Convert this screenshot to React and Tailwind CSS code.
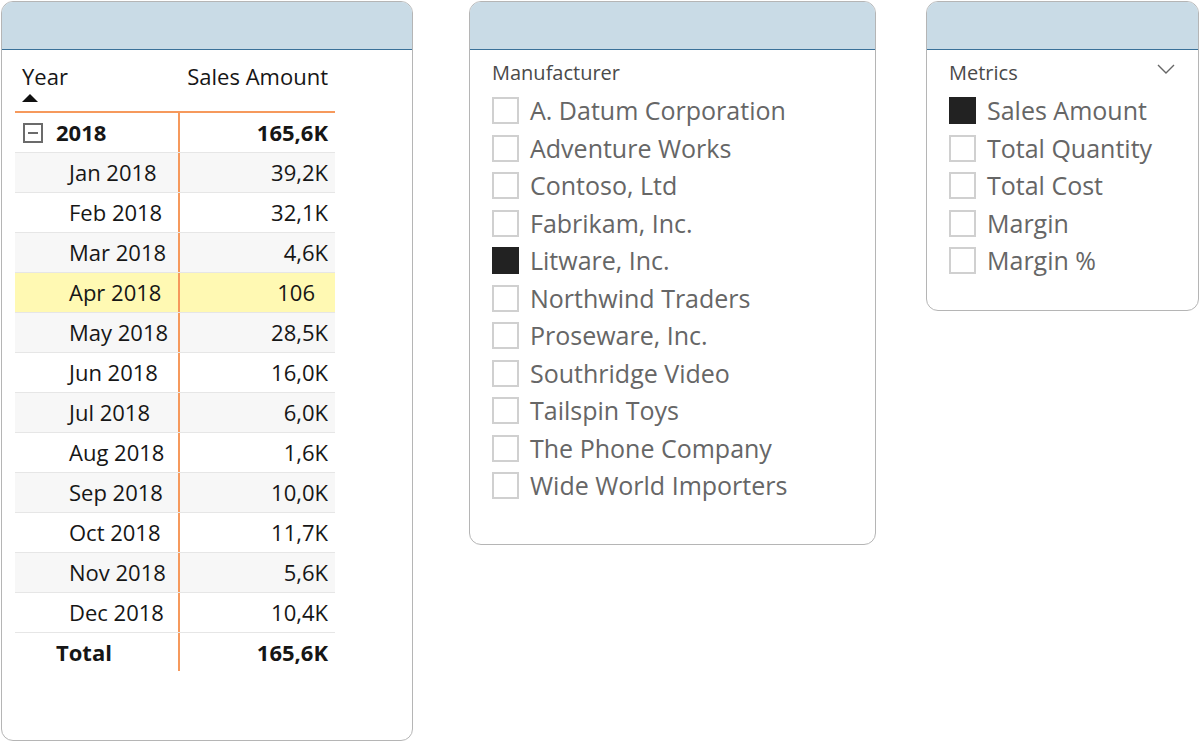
import { useState } from 'react';

const MONTHS = [
  { label: 'Jan 2018', value: '39,2K', bg: 'bg-[#f7f7f7]' },
  { label: 'Feb 2018', value: '32,1K', bg: 'bg-white' },
  { label: 'Mar 2018', value: '4,6K', bg: 'bg-[#f7f7f7]' },
  { label: 'Apr 2018', value: '106', bg: 'bg-[#fff9b3]', highlight: true },
  { label: 'May 2018', value: '28,5K', bg: 'bg-[#f7f7f7]' },
  { label: 'Jun 2018', value: '16,0K', bg: 'bg-white' },
  { label: 'Jul 2018', value: '6,0K', bg: 'bg-[#f7f7f7]' },
  { label: 'Aug 2018', value: '1,6K', bg: 'bg-white' },
  { label: 'Sep 2018', value: '10,0K', bg: 'bg-[#f7f7f7]' },
  { label: 'Oct 2018', value: '11,7K', bg: 'bg-white' },
  { label: 'Nov 2018', value: '5,6K', bg: 'bg-[#f7f7f7]' },
  { label: 'Dec 2018', value: '10,4K', bg: 'bg-white' }
];

const MANUFACTURERS = [
  'A. Datum Corporation',
  'Adventure Works',
  'Contoso, Ltd',
  'Fabrikam, Inc.',
  'Litware, Inc.',
  'Northwind Traders',
  'Proseware, Inc.',
  'Southridge Video',
  'Tailspin Toys',
  'The Phone Company',
  'Wide World Importers'
];

const METRICS = ['Sales Amount', 'Total Quantity', 'Total Cost', 'Margin', 'Margin %'];

function Panel({ className, children }) {
  return (
    <div
      className={`flex flex-col flex-shrink-0 rounded-[12px] border border-[#b5b5b5] bg-white overflow-hidden ${className}`}
    >
      {/* Header band */}
      <div className="h-[48px] bg-[#c9dbe6] border-b border-[#3a7199] flex-shrink-0" />
      {children}
    </div>
  );
}

function SlicerItem({ label, checked, onToggle }) {
  return (
    <div
      onClick={onToggle}
      className="h-[37.5px] flex items-center gap-[11px] cursor-pointer"
    >
      <span
        className={`w-[27px] h-[27px] flex-shrink-0 border-2 ${
          checked ? 'bg-[#222222] border-[#222222]' : 'bg-white border-[#d0d0d0]'
        }`}
      />
      <span className="text-[25px] leading-none text-[#666666] whitespace-nowrap">
        {label}
      </span>
    </div>
  );
}

function Matrix() {
  return (
    <div className="ml-[13px] w-[320px] text-[#161616]">
      {/* Column headers */}
      <div className="h-[63px] flex border-b-2 border-[#f6995c]">
        <div className="w-[163px] pl-[7px] pt-[11px]">
          <div className="text-[22px] leading-[30px]">Year</div>
          <svg width="16" height="8" viewBox="0 0 16 8" className="mt-[3px]">
            <polygon points="0,8 8,0 16,8" fill="#111" />
          </svg>
        </div>
        <div className="flex-1 pr-[7px] pt-[11px] text-right text-[22px] leading-[30px]">
          Sales Amount
        </div>
      </div>

      {/* Year row */}
      <div className="h-[40px] flex border-b border-[#e6e6e6] bg-white">
        <div className="w-[165px] border-r-2 border-[#f6995c] flex items-center pl-[8px]">
          <span className="w-[20px] h-[20px] border-2 border-[#6b6b6b] flex items-center justify-center">
            <span className="w-[10px] h-[2px] bg-[#6b6b6b]" />
          </span>
          <span className="ml-[13px] text-[22px] font-bold">2018</span>
        </div>
        <div className="flex-1 flex items-center justify-end pr-[7px] text-[22px] font-bold">
          165,6K
        </div>
      </div>

      {MONTHS.map(m => (
        <div
          key={m.label}
          className={`h-[40px] flex border-b border-[#e6e6e6] ${m.bg}`}
        >
          <div className="w-[165px] border-r-2 border-[#f6995c] flex items-center pl-[54px] text-[22px]">
            {m.label}
          </div>
          <div
            className={`flex-1 flex items-center justify-end text-[22px] ${
              m.highlight ? 'pr-[20px]' : 'pr-[7px]'
            }`}
          >
            {m.value}
          </div>
        </div>
      ))}

      {/* Total */}
      <div className="h-[38px] flex bg-white">
        <div className="w-[165px] border-r-2 border-[#f6995c] flex items-center pl-[41px] text-[22px] font-bold">
          Total
        </div>
        <div className="flex-1 flex items-center justify-end pr-[7px] text-[22px] font-bold">
          165,6K
        </div>
      </div>
    </div>
  );
}

export default function App() {
  const [maker, setMaker] = useState('Litware, Inc.');
  const [metric, setMetric] = useState('Sales Amount');

  return (
    <div
      className="w-[1199px] h-[741px] bg-white flex items-start pl-[1px] pt-[1px]"
      style={{ fontFamily: '"Open Sans", "Noto Sans", sans-serif' }}
    >
      {/* Matrix visual */}
      <Panel className="w-[412px] h-[740px]">
        <Matrix />
      </Panel>

      {/* Manufacturer slicer */}
      <Panel className="w-[407px] h-[544px] ml-[56px]">
        <div className="pl-[22px] pt-[9px]">
          <div className="text-[20px] leading-[28px] text-[#4a4a4a] mb-[5px]">
            Manufacturer
          </div>
          {MANUFACTURERS.map(name => (
            <SlicerItem
              key={name}
              label={name}
              checked={maker === name}
              onToggle={() => setMaker(name)}
            />
          ))}
        </div>
      </Panel>

      {/* Metrics slicer */}
      <Panel className="w-[273px] h-[310px] ml-[50px]">
        <div className="pl-[22px] pr-[23px] pt-[9px]">
          <div className="flex items-center justify-between mb-[5px]">
            <span className="text-[20px] leading-[28px] text-[#4a4a4a]">Metrics</span>
            <svg width="18" height="10" viewBox="0 0 18 10" className="-mt-[8px]">
              <polyline points="1,1 9,9 17,1" fill="none" stroke="#666" strokeWidth="1.4" />
            </svg>
          </div>
          {METRICS.map(name => (
            <SlicerItem
              key={name}
              label={name}
              checked={metric === name}
              onToggle={() => setMetric(name)}
            />
          ))}
        </div>
      </Panel>
    </div>
  );
}
